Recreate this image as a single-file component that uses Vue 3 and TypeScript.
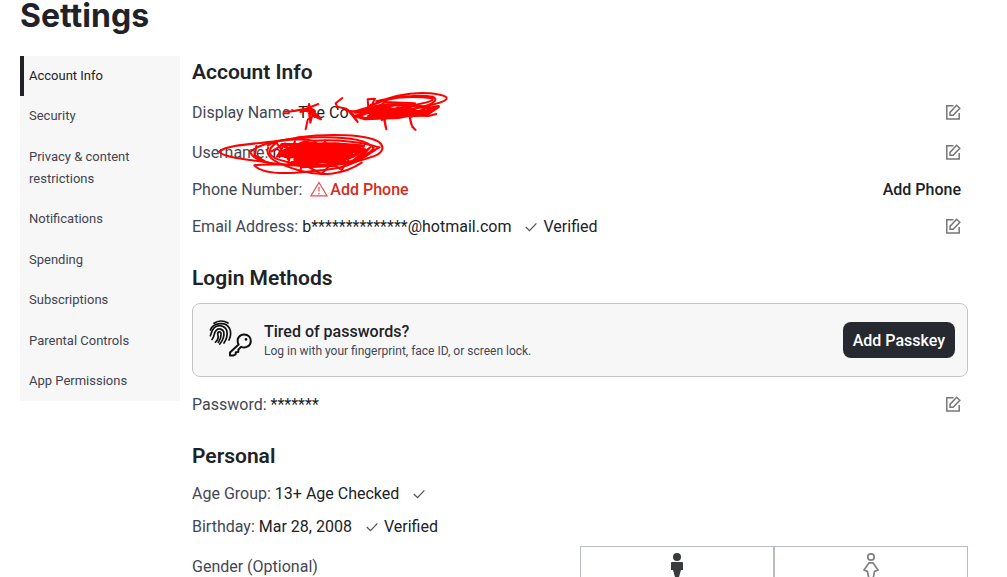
<script setup lang="ts">
import { ref } from 'vue'

interface NavItem {
  id: string
  label: string
}

const navItems: NavItem[] = [
  { id: 'info', label: 'Account Info' },
  { id: 'security', label: 'Security' },
  { id: 'privacy', label: 'Privacy & content restrictions' },
  { id: 'notifications', label: 'Notifications' },
  { id: 'spending', label: 'Spending' },
  { id: 'subscriptions', label: 'Subscriptions' },
  { id: 'parental', label: 'Parental Controls' },
  { id: 'permissions', label: 'App Permissions' },
]

const active = ref('info')
const gender = ref<'male' | 'female'>('male')

const editFrame = 'M8.5 1.8H1.8V15H14.2V9'
const editPen = 'M5 11.2V8.4L11.6 1.2L14.8 4.2L8.2 11.2Z'
</script>

<template>
  <div class="page">
    <h1>Settings</h1>
    <div class="columns">
      <nav class="side">
        <a
          v-for="item in navItems"
          :key="item.id"
          :href="'#' + item.id"
          :class="{ active: item.id === active }"
          @click.prevent="active = item.id"
        >{{ item.label }}</a>
      </nav>

      <main>
        <section>
          <h2>Account Info</h2>
          <div class="row">
            <span class="label">Display Name:</span>
            <span class="value">The Co</span>
            <button class="edit" type="button" aria-label="Edit display name">
              <svg viewBox="0 0 16 16"><path :d="editFrame" /><path :d="editPen" /></svg>
            </button>
          </div>
          <div class="row">
            <span class="label">Username:</span>
            <span class="value">no</span>
            <button class="edit" type="button" aria-label="Edit username">
              <svg viewBox="0 0 16 16"><path :d="editFrame" /><path :d="editPen" /></svg>
            </button>
          </div>
          <div class="row compact">
            <span class="label">Phone Number:</span>
            <a class="warn" href="#phone">
              <svg viewBox="0 0 18 16"><path d="M9 1.5L17 14.8H1Z" /><path d="M9 6V10.5M9 11.8V13.4" /></svg>
              <span class="value">Add Phone</span>
            </a>
            <button class="text-action" type="button">Add Phone</button>
          </div>
          <div class="row">
            <span class="label">Email Address:</span>
            <span class="value">b**************@hotmail.com</span>
            <svg class="check" viewBox="0 0 12 10"><path d="M0.8 5L4.5 8.6L11.4 1.4" /></svg>
            <span class="value">Verified</span>
            <button class="edit" type="button" aria-label="Edit email address">
              <svg viewBox="0 0 16 16"><path :d="editFrame" /><path :d="editPen" /></svg>
            </button>
          </div>
        </section>

        <section>
          <h2>Login Methods</h2>
          <div class="card">
            <svg class="passkey" viewBox="0 0 44 40">
              <g class="print">
                <path d="M5 3.2C8.8 0.4 14.5 0.2 19 3" />
                <path d="M1.4 10C4 2.8 16.5 0.8 20.6 8.5C22.4 12.4 21.6 16.6 20 20" />
                <path d="M1.4 15.8C2.4 13.2 2.6 10.5 4.8 8.1C8.8 4.2 15.8 5.2 17.8 10.6C18.8 15 17.4 19.4 15 23" />
                <path d="M3 19.5C5.8 16.6 4.4 12.8 7.4 10.1C10 7.8 14 9 14.8 12.1C15.4 16 13.8 20.4 10.8 24" />
                <path d="M6.5 22.2C9.4 19.4 9.6 17 8.8 14.8C8.2 11.4 12 10.8 12.1 14C12.3 17.2 11 20 9.3 22.4" />
              </g>
              <path class="key" d="M29.6 24.6C26.6 18.2 31.2 14.4 35 14.4C39.2 14.4 42 17.4 41.8 21.2C41.6 25.8 37 28.8 32.2 26.8L29.4 29.6L29.2 32L26.8 32.2L26.6 34.4L24.6 35.4H21V32.4Z" />
              <circle cx="37" cy="19.4" r="1.3" />
            </svg>
            <div class="card-text">
              <h3>Tired of passwords?</h3>
              <p>Log in with your fingerprint, face ID, or screen lock.</p>
            </div>
            <button class="primary" type="button">Add Passkey</button>
          </div>
          <div class="row">
            <span class="label">Password:</span>
            <span class="value">*******</span>
            <button class="edit" type="button" aria-label="Edit password">
              <svg viewBox="0 0 16 16"><path :d="editFrame" /><path :d="editPen" /></svg>
            </button>
          </div>
        </section>

        <section>
          <h2>Personal</h2>
          <div class="row tight">
            <span class="label">Age Group:</span>
            <span class="value">13+ Age Checked</span>
            <svg class="check" viewBox="0 0 12 10"><path d="M0.8 5L4.5 8.6L11.4 1.4" /></svg>
          </div>
          <div class="row tight">
            <span class="label">Birthday:</span>
            <span class="value">Mar 28, 2008</span>
            <svg class="check" viewBox="0 0 12 10"><path d="M0.8 5L4.5 8.6L11.4 1.4" /></svg>
            <span class="value">Verified</span>
          </div>
          <div class="gender">
            <span id="gender-label" class="label">Gender (Optional)</span>
            <div class="choices" role="group" aria-labelledby="gender-label">
              <button type="button" aria-label="Male" :aria-pressed="gender === 'male'" @click="gender = 'male'">
                <svg viewBox="0 0 16 32">
                  <circle class="solid" cx="8" cy="4" r="4" />
                  <path class="solid" d="M2 10Q2 9 3 9H13Q14 9 14 10V17H12L10 24V31H6V24L4 17H2Z" />
                </svg>
              </button>
              <button type="button" aria-label="Female" :aria-pressed="gender === 'female'" @click="gender = 'female'">
                <svg viewBox="0 0 16 32">
                  <circle class="line" cx="8" cy="4" r="3.2" />
                  <path class="line" d="M6 9.8H10L15 17L11.6 18.4L10.4 24V30H5.6V24L4.4 18.4L1 17Z" />
                </svg>
              </button>
            </div>
          </div>
        </section>

        <svg class="scribble" viewBox="0 0 810 300" aria-hidden="true">
          <path d="M297 83C315 86 345 77 364 74L400 60M372 60C380 78 378 98 368 108L362 136M346 84L376 76L408 106L382 94L376 116L370 66L390 82L360 80L398 92L372 88" />
          <path d="M472 42L452 58L456 68L484 74L500 92L518 114L502 88L486 76" />
          <path d="M550 72L548 46L570 44L560 64C600 42 670 22 735 28C768 32 790 36 784 46C772 58 740 62 690 74M570 60C620 40 700 30 742 38C768 48 738 66 676 76M574 52C630 36 700 38 736 42C760 48 720 58 680 64" />
          <path d="M596 90L604 136M598 108L602 130M668 92C684 102 666 118 692 138M674 98L682 130" />
          <path class="thick" d="M510 84C560 68 600 58 676 64L740 72L760 68L724 92L660 84L730 82L640 100L540 104L512 96L620 66L530 88L664 72L550 98L688 78L600 98L720 84L560 78L510 84M730 92L690 94L748 72M540 76L580 96L610 72L640 94L670 70L700 90L740 76M530 92L570 74L600 92L640 72L680 96L716 76M556 88L620 86L690 84M560 100L640 92L700 88" />
          <path d="M590 108L640 90L730 96L754 90M486 80L530 84L558 62L570 76L600 54L690 58" />
          <path d="M102 203C130 176 270 180 340 160C430 148 545 150 582 174C604 192 588 212 556 220C470 252 350 248 262 238C192 226 118 222 102 203Z" />
          <path d="M196 204C220 178 300 162 398 160C492 158 548 170 566 192C536 236 420 256 330 244C260 244 202 228 196 204ZM208 244C238 276 330 268 390 260C462 256 520 242 566 196M208 244C244 238 300 242 370 244M250 190C236 220 280 242 346 260C410 280 480 270 530 236M214 186L210 214L240 232" />
          <path d="M248 184C280 164 350 164 386 170C464 166 540 176 582 190L540 218C480 246 360 250 300 232C246 220 242 200 274 176L306 220L330 172M260 202L300 178L276 218L320 190L310 240M540 178L520 228L556 190L500 232L584 190M346 264L350 238L410 270L440 238L470 258L490 228" />
          <path class="thick" d="M290 182L450 180L530 186L486 198L310 194L360 174L430 190L280 214L500 210L330 226L482 224L360 240L340 214L450 236L500 218L540 198L400 184L290 202L430 216L320 236L410 246L480 232M300 188L360 222L390 176L430 222L460 180L500 204M330 180L310 224M420 176L390 236M320 204L520 202M310 218L500 218M340 232L470 230M350 248L450 244M320 188L500 190M390 200L470 236L510 192L450 208" />
        </svg>
      </main>
    </div>
  </div>
</template>

<style>
body {
  background: #fff;
}
</style>

<style scoped>
.page {
  box-sizing: border-box;
  height: 100vh;
  overflow: hidden;
  padding: 0 39px 0 20px;
  color: #202227;
  font-family: Roboto, "Liberation Sans", sans-serif;
  font-size: 16px;
  line-height: 24px;
}

h1,
h2,
h3,
p {
  margin: 0;
}

h1 {
  margin-bottom: 24px;
  font-family: Inter, "Liberation Sans", sans-serif;
  font-size: 32px;
  font-weight: 700;
  line-height: 32px;
}

h2 {
  margin-bottom: 6px;
  font-size: 21px;
  font-weight: 600;
  line-height: 28px;
}

button {
  padding: 0;
  border: 0;
  background: none;
  color: inherit;
  font: inherit;
  cursor: pointer;
}

a {
  color: inherit;
  text-decoration: none;
}

svg {
  display: block;
  flex: none;
  fill: none;
}

.columns {
  display: flex;
  align-items: flex-start;
  gap: 12px;
}

.side {
  box-sizing: border-box;
  display: flex;
  flex: 0 0 160px;
  flex-direction: column;
  justify-content: space-between;
  min-height: 345px;
  background: #f7f7f8;
}

.side a {
  padding: 9px 24px 9px 5px;
  border-left: 4px solid transparent;
  color: #41444f;
  font-size: 13px;
  line-height: 22px;
}

.side a.active {
  border-left-color: #202227;
  color: #202227;
}

main {
  position: relative;
  flex: 1;
  min-width: 0;
  padding-top: 2px;
}

section + section {
  margin-top: 18px;
}

.row {
  display: flex;
  align-items: center;
  min-height: 40px;
  padding-right: 7px;
}

.row.compact {
  min-height: 34px;
}

.row.tight {
  min-height: 33px;
}

.label,
.value,
.text-action {
  padding-top: 2px;
}

.label {
  margin-right: 4px;
  color: #434754;
}

.check {
  width: 12px;
  height: 10px;
  margin: 2px 6px 0 14px;
  stroke: #555;
  stroke-width: 1.3;
}

.edit {
  margin-left: auto;
}

.edit svg {
  width: 16px;
  height: 16px;
  stroke: #777;
  stroke-width: 1.5;
}

.warn {
  display: flex;
  align-items: center;
  gap: 2px;
  margin-left: 4px;
  color: #d92b20;
  font-weight: 500;
}

.warn svg {
  width: 18px;
  height: 16px;
  stroke: #ee4b50;
  stroke-width: 1.2;
}

.text-action {
  margin-left: auto;
  font-weight: 500;
}

.card {
  box-sizing: border-box;
  display: flex;
  align-items: center;
  min-height: 74px;
  margin: 11px 0 7px;
  padding: 12px;
  border: 1px solid #c4c5c8;
  border-radius: 8px;
  background: #f7f7f8;
}

.passkey {
  width: 44px;
  height: 40px;
  margin: 0 11px 0 4px;
  stroke: #111;
  stroke-linecap: round;
  stroke-linejoin: round;
}

.print {
  stroke-width: 1.7;
}

.key {
  stroke-width: 2;
}

.passkey circle {
  fill: #111;
  stroke: none;
}

.card-text {
  flex: 1;
  padding-top: 2px;
}

h3 {
  font-size: 16px;
  font-weight: 500;
  line-height: 20px;
}

.card-text p {
  color: #434754;
  font-size: 12px;
  line-height: 18px;
}

.primary {
  height: 36px;
  padding: 2px 10px 0;
  border-radius: 8px;
  background: #272930;
  color: #fff;
  font-weight: 500;
}

.gender {
  display: grid;
  grid-template-columns: 1fr 1fr;
  margin-top: 4px;
}

.gender .label {
  padding-top: 9px;
}

.choices {
  display: grid;
  grid-template-columns: 1fr 1fr;
}

.choices button {
  display: flex;
  justify-content: center;
  padding: 6px 0;
  border: 1px solid #b9bbc6;
}

.choices svg {
  width: 16px;
  height: 32px;
}

.solid {
  fill: #393b3d;
}

.line {
  stroke: #808080;
  stroke-width: 1.7;
}

.scribble {
  position: absolute;
  top: 28px;
  left: -7px;
  width: 270px;
  height: 100px;
  pointer-events: none;
  stroke: #f00;
  stroke-width: 6;
  stroke-linecap: round;
  stroke-linejoin: round;
}

.scribble .thick {
  stroke-width: 10;
}
</style>
